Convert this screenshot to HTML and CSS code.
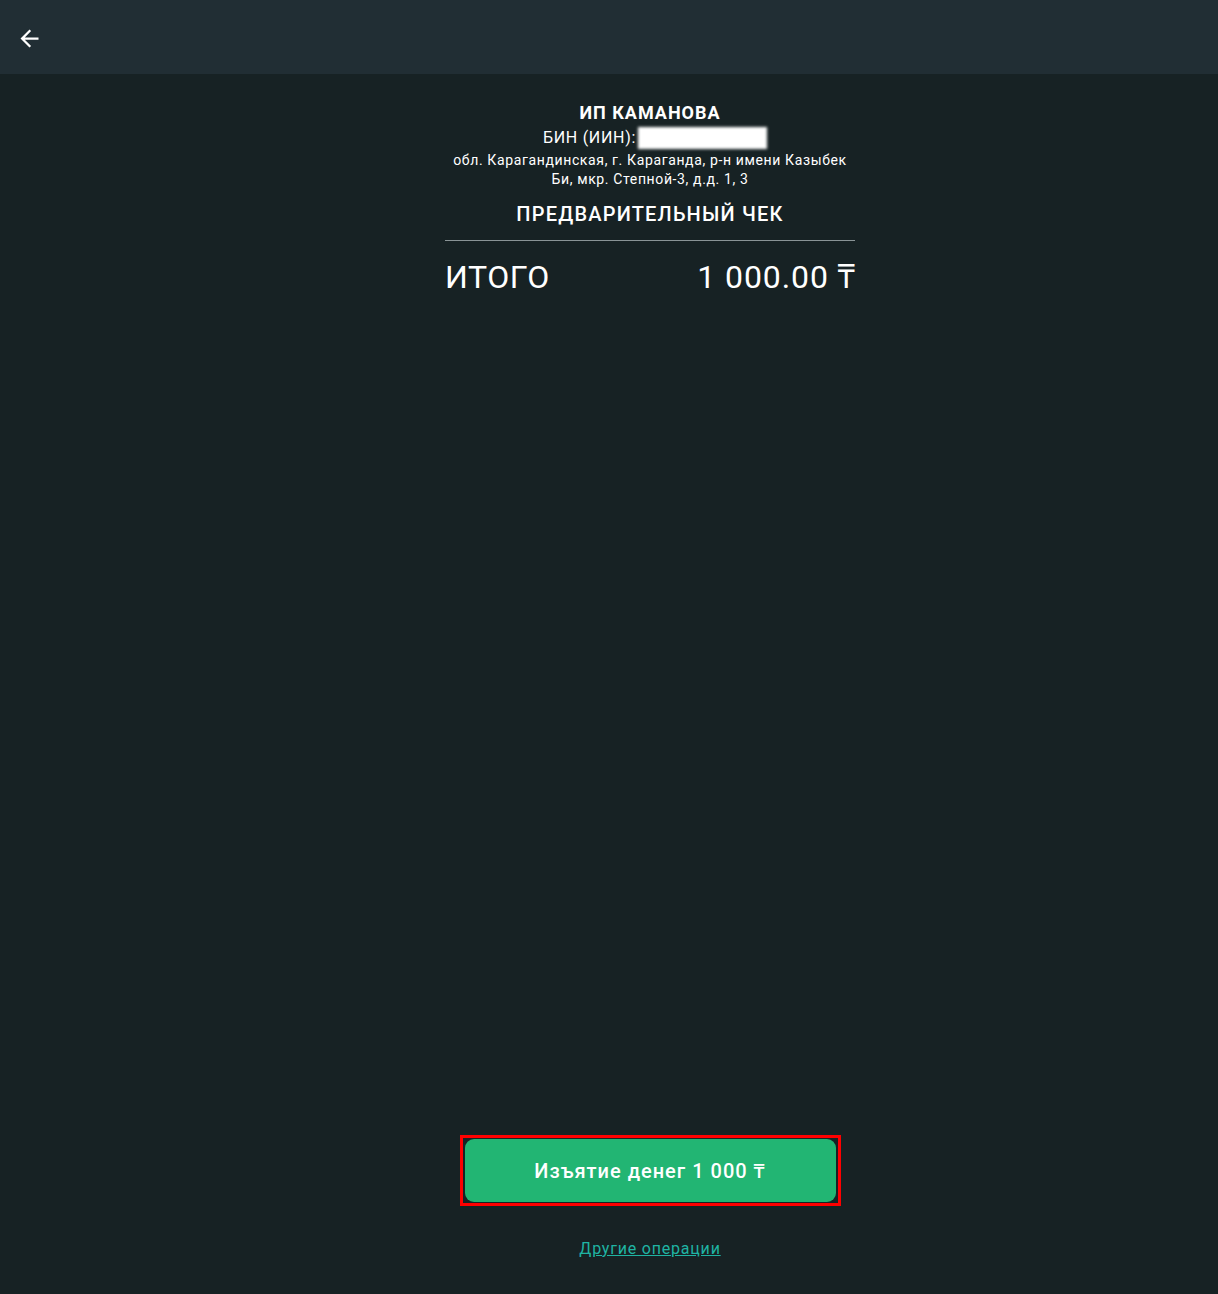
FILE: index.html
```html
<!DOCTYPE html>
<html lang="ru">
<head>
<meta charset="utf-8">
<title>Чек</title>
<link rel="stylesheet" href="styles.css">
</head>
<body>
<header class="topbar">
  <button class="back" aria-label="Назад">
    <svg viewBox="0 0 24 24" width="27" height="27"><path fill="#ffffff" d="M20 11H7.83l5.59-5.59L12 4l-8 8 8 8 1.41-1.41L7.83 13H20v-2z"/></svg>
  </button>
</header>
<main class="main">
  <section class="receipt">
    <div class="org">ИП КАМАНОВА</div>
    <div class="bin">БИН (ИИН):<span class="masked"></span></div>
    <div class="address">обл. Карагандинская, г. Караганда, р-н имени Казыбек<br>Би, мкр. Степной-3, д.д. 1, 3</div>
    <div class="doc-title">ПРЕДВАРИТЕЛЬНЫЙ ЧЕК</div>
    <div class="divider"></div>
    <div class="total">
      <span class="total-label">ИТОГО</span>
      <span class="total-value">1 000.00 ₸</span>
    </div>
  </section>
  <div class="actions">
    <div class="highlight">
      <button class="primary">Изъятие денег 1 000 ₸</button>
    </div>
    <a class="other" href="#">Другие операции</a>
  </div>
</main>
</body>
</html>
```
FILE: styles.css
```css
* { box-sizing: border-box; }
html, body { margin: 0; padding: 0; }
body {
  background: #172224;
  color: #ffffff;
  font-family: Roboto, "Noto Sans", sans-serif;
  width: 1218px;
  min-height: 1294px;
  display: flex;
  flex-direction: column;
}
.topbar {
  height: 74px;
  background: #212e34;
  display: flex;
  align-items: center;
  padding-left: 16px;
  flex-shrink: 0;
}
.back {
  background: none;
  border: 0;
  padding: 0;
  width: 27px;
  height: 27px;
  display: flex;
  margin-top: 2px;
}
.main {
  flex: 1;
  display: flex;
  flex-direction: column;
  align-items: center;
  padding-left: 82px;
  padding-top: 27px;
  padding-bottom: 36px;
}
.receipt {
  width: 410px;
  text-align: center;
}
.org {
  font-size: 18px;
  line-height: 24px;
  font-weight: 700;
  letter-spacing: 1px;
}
.bin {
  font-size: 16px;
  line-height: 26px;
  letter-spacing: 0.7px;
  display: flex;
  justify-content: center;
  align-items: center;
  padding-left: 10px;
}
.masked {
  display: inline-block;
  width: 129px;
  height: 22px;
  background: #ffffff;
  filter: blur(1.5px);
  margin-left: 2px;
}
.address {
  font-size: 14px;
  line-height: 19px;
  letter-spacing: 0.63px;
}
.doc-title {
  margin-top: 13px;
  font-size: 20px;
  line-height: 24px;
  font-weight: 500;
  letter-spacing: 1.2px;
}
.divider {
  margin-top: 14px;
  height: 1px;
  background: #8a9496;
}
.total {
  margin-top: 17px;
  display: flex;
  justify-content: space-between;
  font-size: 32px;
  line-height: 38px;
}
.total-label { letter-spacing: 0.6px; }
.total-value { letter-spacing: 0.9px; margin-right: -1px; }
.actions {
  margin-top: auto;
  display: flex;
  flex-direction: column;
  align-items: center;
}
.highlight {
  border: 3px solid #ff0000;
  padding: 1px 2px;
}
.primary {
  width: 371px;
  height: 63px;
  border: 0;
  border-radius: 9px;
  background: #22b573;
  color: #ffffff;
  font-family: Roboto, "Noto Sans", sans-serif;
  font-size: 20px;
  font-weight: 500;
  letter-spacing: 1px;
  padding-top: 1px;
  display: block;
}
.other {
  margin-top: 33px;
  color: #1fb4a3;
  font-size: 16px;
  line-height: 19px;
  letter-spacing: 0.8px;
  text-decoration: underline;
}
```
